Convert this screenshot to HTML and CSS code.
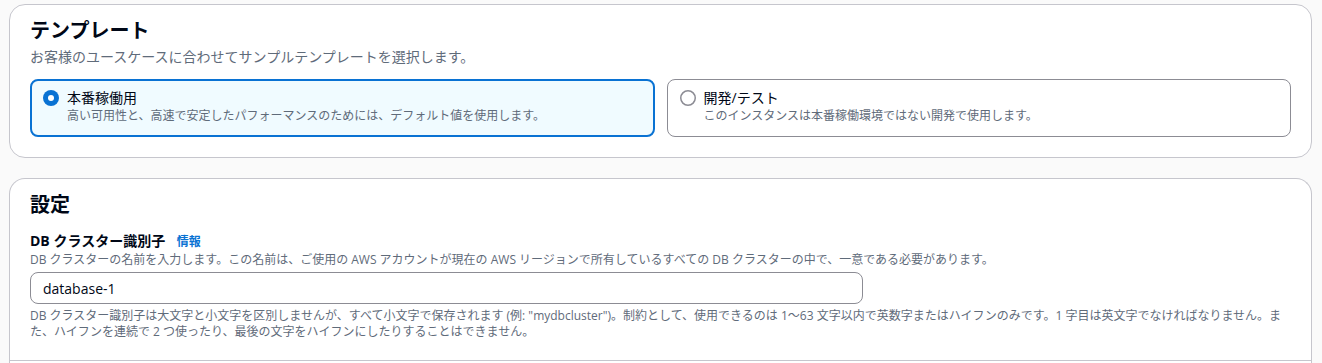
FILE: index.html
```html
<!DOCTYPE html>
<html lang="ja">
<head>
    <meta charset="UTF-8">
    <meta name="viewport" content="width=device-width, initial-scale=1.0">
    <title>データベースの作成</title>
    <link rel="stylesheet" href="styles.css">
</head>
<body>

    <!-- テンプレート -->
    <div class="container">
        <h2 class="container-title">テンプレート</h2>
        <p class="container-desc">お客様のユースケースに合わせてサンプルテンプレートを選択します。</p>

        <div class="tiles">
            <label class="tile tile-selected">
                <svg class="radio" width="16" height="16" viewBox="0 0 16 16">
                    <circle cx="8" cy="8" r="8" fill="#0972d3"/>
                    <circle cx="8" cy="8" r="3" fill="#ffffff"/>
                </svg>
                <span class="tile-text">
                    <span class="tile-label">本番稼働用</span>
                    <span class="tile-desc">高い可用性と、高速で安定したパフォーマンスのためには、デフォルト値を使用します。</span>
                </span>
            </label>
            <label class="tile">
                <svg class="radio" width="16" height="16" viewBox="0 0 16 16">
                    <circle cx="8" cy="8" r="7.25" fill="#ffffff" stroke="#8c8c94" stroke-width="1.5"/>
                </svg>
                <span class="tile-text">
                    <span class="tile-label">開発/テスト</span>
                    <span class="tile-desc">このインスタンスは本番稼働環境ではない開発で使用します。</span>
                </span>
            </label>
        </div>
    </div>

    <!-- 設定 -->
    <div class="container container-open">
        <h2 class="container-title">設定</h2>

        <div class="field">
            <div class="field-label">
                <label for="dbClusterId">DB クラスター識別子</label>
                <a class="info-link" href="#">情報</a>
            </div>
            <div class="field-desc">DB クラスターの名前を入力します。この名前は、ご使用の AWS アカウントが現在の AWS リージョンで所有しているすべての DB クラスターの中で、一意である必要があります。</div>
            <input class="text-input" type="text" id="dbClusterId" name="dbClusterId" value="database-1">
            <div class="field-constraint">DB クラスター識別子は大文字と小文字を区別しませんが、すべて小文字で保存されます (例: "mydbcluster")。制約として、使用できるのは 1～63 文字以内で英数字またはハイフンのみです。1 字目は英文字でなければなりません。また、ハイフンを連続で 2 つ使ったり、最後の文字をハイフンにしたりすることはできません。</div>
        </div>

        <div class="section-divider"></div>
    </div>

</body>
</html>
```

FILE: styles.css
```css
body {
    font-family: "Open Sans", "Noto Sans CJK JP", sans-serif;
    margin: 0;
    padding: 4px 10px 0 9px;
    background-color: #fafafa;
    color: #000716;
    font-size: 14px;
    line-height: 20px;
}
.container {
    background: #fff;
    border: 1px solid #c6c6cd;
    border-radius: 16px;
    padding: 14px 20px 20px;
}
.container + .container {
    margin-top: 20px;
}
.container-open {
    padding-bottom: 0;
    border-bottom: none;
    border-bottom-left-radius: 0;
    border-bottom-right-radius: 0;
}
.container-title {
    margin: 0;
    font-size: 20px;
    line-height: 24px;
    font-weight: bold;
}
.container-desc {
    margin: 4px 0 0;
    color: #5f6b7a;
}
.tiles {
    display: grid;
    grid-template-columns: 1fr 1fr;
    gap: 12px;
    margin-top: 12px;
}
.tile {
    display: flex;
    align-items: flex-start;
    gap: 8px;
    border: 1px solid #8c8c94;
    border-radius: 8px;
    padding: 8px 12px 12px;
    cursor: pointer;
}
.tile-selected {
    border: 2px solid #0972d3;
    background-color: #f0fbff;
    padding: 7px 11px 11px;
}
.radio {
    flex: none;
    margin-top: 2px;
}
.tile-text {
    display: flex;
    flex-direction: column;
}
.tile-desc {
    font-size: 12px;
    line-height: 16px;
    color: #5f6b7a;
}
.field {
    margin-top: 14px;
    padding-bottom: 20px;
}
.field-label {
    font-weight: bold;
}
.info-link {
    margin-left: 8px;
    font-size: 12px;
    color: #0972d3;
    text-decoration: none;
}
.field-desc, .field-constraint {
    font-size: 12px;
    line-height: 16px;
    color: #5f6b7a;
}
.text-input {
    display: block;
    box-sizing: border-box;
    width: 833px;
    height: 32px;
    margin: 4px 0;
    padding: 4px 12px;
    border: 1px solid #8c8c94;
    border-radius: 8px;
    font-family: inherit;
    font-size: 14px;
    color: #000716;
}
.section-divider {
    margin: 0 -20px;
    border-top: 1px solid #c6c6cd;
    height: 10px;
}
```
